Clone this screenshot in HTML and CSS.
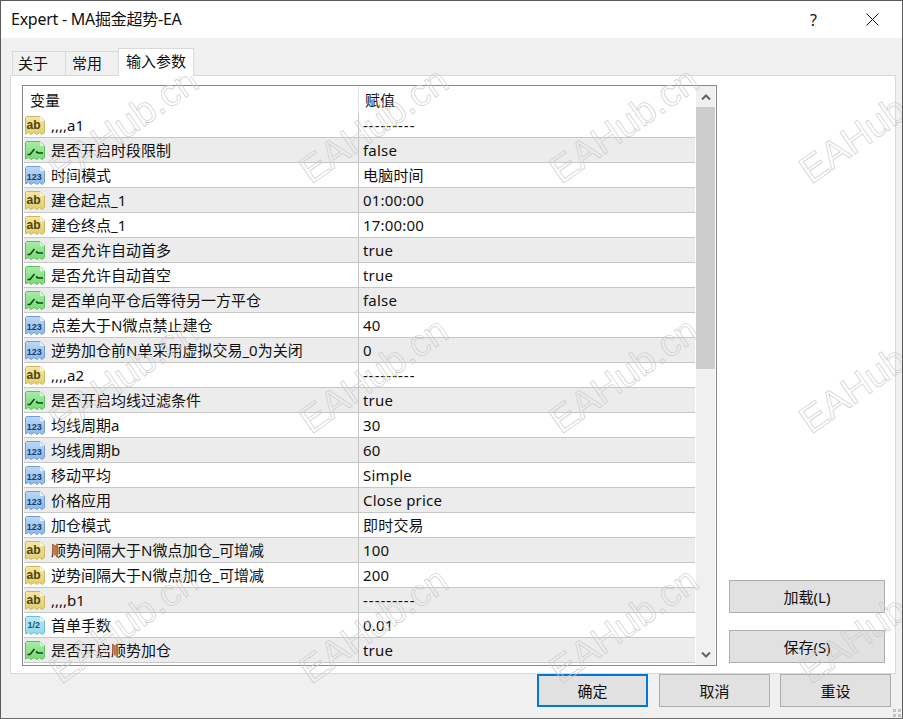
FILE: index.html
```html
<!DOCTYPE html>
<html lang="zh">
<head>
<meta charset="utf-8">
<title>Expert - MA掘金超势-EA</title>
<link rel="stylesheet" href="styles.css">
</head>
<body>
<svg class="defs" width="0" height="0" aria-hidden="true">
  <defs>
    <linearGradient id="gy" x1="0" y1="0" x2="0" y2="1"><stop offset="0" stop-color="#f3e8a4"/><stop offset="1" stop-color="#e2cd6e"/></linearGradient>
    <linearGradient id="gg" x1="0" y1="0" x2="0" y2="1"><stop offset="0" stop-color="#a8eca8"/><stop offset="1" stop-color="#78da78"/></linearGradient>
    <linearGradient id="gb" x1="0" y1="0" x2="0" y2="1"><stop offset="0" stop-color="#bcd8f5"/><stop offset="1" stop-color="#8db8e8"/></linearGradient>
    <linearGradient id="gc" x1="0" y1="0" x2="0" y2="1"><stop offset="0" stop-color="#bdeaf4"/><stop offset="1" stop-color="#90d8ea"/></linearGradient>
    <path id="ticket" d="M2.500 1.500H16L20.500 6V17.500L18 19.500 15.500 17.500 13 19.500 10 17.500 7 19.500 4.500 17.500 1.500 19V2.500Z"/>
  </defs>
  <symbol id="i-ab" viewBox="0 0 22 21">
    <use href="#ticket" class="tk y"/>
    <path class="ear" d="M16 1.500V6H20.500Z"/>
    <text x="2.500" y="14" class="ic ic-y">ab</text>
  </symbol>
  <symbol id="i-bool" viewBox="0 0 22 21">
    <use href="#ticket" class="tk g"/>
    <path class="ear" d="M16 1.500V6H20.500Z"/>
    <path class="sw" d="M3.500 14.500 6 14.500 10.500 9M12 11.500 14 13H19"/>
  </symbol>
  <symbol id="i-num" viewBox="0 0 22 21">
    <use href="#ticket" class="tk b"/>
    <path class="ear" d="M16 1.500V6H20.500Z"/>
    <text x="2.800" y="14.500" class="ic ic-b">123</text>
  </symbol>
  <symbol id="i-frac" viewBox="0 0 22 21">
    <use href="#ticket" class="tk c"/>
    <path class="ear" d="M16 1.500V6H20.500Z"/>
    <text x="3.500" y="13" class="ic ic-c">1/2</text>
  </symbol>
</svg>

<div class="dialog">
  <header class="titlebar">
    <span class="title">Expert - MA掘金超势-EA</span>
    <span class="help">?</span>
    <svg class="close" width="13" height="13" viewBox="0 0 13 13"><path d="M.5.500 12.500 12.500M12.500.500.500 12.500"/></svg>
  </header>

  <main class="content">
    <nav class="tabs">
      <span class="tab">关于</span>
      <span class="tab">常用</span>
      <span class="tab active">输入参数</span>
    </nav>
    <section class="panel">
      <div class="list">
        <div class="table">
          <div class="thead">
            <span class="c1">变量</span>
            <span class="c2">赋值</span>
          </div>
          <div class="row"><span class="c1"><svg class="icon"><use href="#i-ab"/></svg>,,,,a1</span><span class="c2 dash">---------</span></div>
          <div class="row"><span class="c1"><svg class="icon"><use href="#i-bool"/></svg>是否开启时段限制</span><span class="c2">false</span></div>
          <div class="row"><span class="c1"><svg class="icon"><use href="#i-num"/></svg>时间模式</span><span class="c2">电脑时间</span></div>
          <div class="row"><span class="c1"><svg class="icon"><use href="#i-ab"/></svg>建仓起点_1</span><span class="c2">01:00:00</span></div>
          <div class="row"><span class="c1"><svg class="icon"><use href="#i-ab"/></svg>建仓终点_1</span><span class="c2">17:00:00</span></div>
          <div class="row"><span class="c1"><svg class="icon"><use href="#i-bool"/></svg>是否允许自动首多</span><span class="c2">true</span></div>
          <div class="row"><span class="c1"><svg class="icon"><use href="#i-bool"/></svg>是否允许自动首空</span><span class="c2">true</span></div>
          <div class="row"><span class="c1"><svg class="icon"><use href="#i-bool"/></svg>是否单向平仓后等待另一方平仓</span><span class="c2">false</span></div>
          <div class="row"><span class="c1"><svg class="icon"><use href="#i-num"/></svg>点差大于N微点禁止建仓</span><span class="c2">40</span></div>
          <div class="row"><span class="c1"><svg class="icon"><use href="#i-num"/></svg>逆势加仓前N单采用虚拟交易_0为关闭</span><span class="c2">0</span></div>
          <div class="row"><span class="c1"><svg class="icon"><use href="#i-ab"/></svg>,,,,a2</span><span class="c2 dash">---------</span></div>
          <div class="row"><span class="c1"><svg class="icon"><use href="#i-bool"/></svg>是否开启均线过滤条件</span><span class="c2">true</span></div>
          <div class="row"><span class="c1"><svg class="icon"><use href="#i-num"/></svg>均线周期a</span><span class="c2">30</span></div>
          <div class="row"><span class="c1"><svg class="icon"><use href="#i-num"/></svg>均线周期b</span><span class="c2">60</span></div>
          <div class="row"><span class="c1"><svg class="icon"><use href="#i-num"/></svg>移动平均</span><span class="c2">Simple</span></div>
          <div class="row"><span class="c1"><svg class="icon"><use href="#i-num"/></svg>价格应用</span><span class="c2">Close price</span></div>
          <div class="row"><span class="c1"><svg class="icon"><use href="#i-num"/></svg>加仓模式</span><span class="c2">即时交易</span></div>
          <div class="row"><span class="c1"><svg class="icon"><use href="#i-ab"/></svg>顺势间隔大于N微点加仓_可增减</span><span class="c2">100</span></div>
          <div class="row"><span class="c1"><svg class="icon"><use href="#i-ab"/></svg>逆势间隔大于N微点加仓_可增减</span><span class="c2">200</span></div>
          <div class="row"><span class="c1"><svg class="icon"><use href="#i-ab"/></svg>,,,,b1</span><span class="c2 dash">---------</span></div>
          <div class="row"><span class="c1"><svg class="icon"><use href="#i-frac"/></svg>首单手数</span><span class="c2">0.01</span></div>
          <div class="row"><span class="c1"><svg class="icon"><use href="#i-bool"/></svg>是否开启顺势加仓</span><span class="c2">true</span></div>
        </div>
        <div class="scrollbar">
          <div class="arrow"><svg width="10" height="6" viewBox="0 0 10 6"><path d="M1 5.500 5 1.500 9 5.500"/></svg></div>
          <div class="thumb"></div>
          <div class="track"></div>
          <div class="arrow"><svg width="10" height="6" viewBox="0 0 10 6"><path d="M1 .5 5 4.500 9 .5"/></svg></div>
        </div>
      </div>
      <div class="side">
        <button class="btn side-btn">加载(L)</button>
        <button class="btn side-btn">保存(S)</button>
      </div>
    </section>
    <footer class="footer">
      <button class="btn primary">确定</button>
      <button class="btn">取消</button>
      <button class="btn">重设</button>
    </footer>
  </main>
  <div class="grip"></div>
  <div class="watermarks" aria-hidden="true">
    <span>EAHub.cn</span><span>EAHub.cn</span><span>EAHub.cn</span><span>EAHub.cn</span>
    <span>EAHub.cn</span><span>EAHub.cn</span><span>EAHub.cn</span><span>EAHub.cn</span>
    <span>EAHub.cn</span><span>EAHub.cn</span><span>EAHub.cn</span><span>EAHub.cn</span>
  </div>
</div>
</body>
</html>
```
FILE: styles.css
```css
* { box-sizing: border-box; }
html, body { margin: 0; padding: 0; }
body {
  width: 903px;
  height: 719px;
  overflow: hidden;
  font-family: "Noto Sans", "Noto Sans CJK SC", sans-serif;
  font-size: 15px;
  color: #111;
}
.defs { position: absolute; }

.dialog {
  position: relative;
  width: 903px;
  height: 719px;
  border: 1px solid #5a5a5a;
  border-bottom-color: #6e6e6e;
  background: #f0f0f0;
  display: flex;
  flex-direction: column;
  overflow: hidden;
}
.titlebar {
  height: 37px;
  flex: none;
  background: #fff;
  display: flex;
  align-items: center;
  padding: 0 23px 0 10px;
}
.title { font-size: 16px; flex: 1; line-height: 37px; letter-spacing: -.25px; }
.help { font-size: 16px; margin-right: 49px; }
.close { display: block; }
.close path { stroke: #111; stroke-width: 1; fill: none; }

.content { flex: 1; display: flex; flex-direction: column; padding: 0 6px 0 9px; min-height: 0; }
.tabs { display: flex; align-items: flex-end; height: 37px; flex: none; padding-left: 2px; position: relative; z-index: 1; }
.tab {
  height: 24px;
  width: 53px;
  border: 1px solid #d9d9d9;
  border-bottom: 0;
  border-right: 0;
  line-height: 22px;
  padding-left: 5px;
  background: #f0f0f0;
}
.tab + .tab { padding-left: 6px; }
.tab.active {
  width: 76px;
  height: 28px;
  margin-bottom: -1px;
  background: #fff;
  border-right: 1px solid #d9d9d9;
  padding-left: 7px;
  line-height: 25px;
}

.panel {
  height: 599px;
  flex: none;
  background: #fff;
  border: 1px solid #d9d9d9;
  display: flex;
  padding: 9px 0 0 11px;
}
.list {
  width: 695px;
  height: 581px;
  flex: none;
  border: 1px solid #88888c;
  display: flex;
  padding: 0 2px 0 1px;
}
.table { width: 671px; flex: none; }
.thead { height: 27px; display: flex; line-height: 28px; }
.thead .c1 { padding-left: 6px; }
.thead .c2 { padding-left: 6px; border-left: 1px solid #e4e4e4; }
.c1 { width: 334px; flex: none; display: flex; align-items: center; white-space: nowrap; }
.c2 { flex: 1; white-space: nowrap; }
.row {
  height: 25px;
  display: flex;
  line-height: 24px;
  border-bottom: 1px solid #c6c6c6;
  background: #fff;
}
.row:nth-child(odd) { background: #ececec; }
.row .c2 { border-left: 1px solid #c6c6c6; padding-left: 4px; letter-spacing: .2px; }
.row .dash { letter-spacing: 1px; }
.icon { width: 22px; height: 21px; margin: 0 5px 0 0; flex: none; display: block; }

.tk { stroke-width: 1; }
.tk.y { fill: url(#gy); stroke: #cdb861; }
.tk.g { fill: url(#gg); stroke: #5cc25c; }
.tk.b { fill: url(#gb); stroke: #6f9fd6; }
.tk.c { fill: url(#gc); stroke: #6cc0d6; }
.ear { fill: #fff; opacity: .7; }
.sw { stroke: #0f4a0f; stroke-width: 1.6; fill: none; }
.ic { font-family: "Liberation Sans", sans-serif; font-weight: 700; }
.ic-y { font-size: 12px; fill: #4f4210; }
.ic-b { font-size: 9px; fill: #143f73; }
.ic-c { font-size: 9px; fill: #125a6e; }

.scrollbar { width: 19px; margin-left: 1px; flex: none; display: flex; flex-direction: column; background: #f0f0f0; }
.arrow { height: 21px; flex: none; display: flex; align-items: center; justify-content: center; }
.arrow path { fill: none; stroke: #606060; stroke-width: 2; }
.thumb { height: 262px; flex: none; background: #cdcdcd; }
.track { flex: 1; }

.side {
  flex: 1;
  display: flex;
  flex-direction: column;
  align-items: flex-end;
  justify-content: flex-end;
  gap: 17px;
  padding: 0 10px 10px 0;
}
.btn {
  font: inherit;
  color: #111;
  width: 111px;
  height: 33px;
  background: #e1e1e1;
  border: 1px solid #adadad;
  padding: 0;
}
.side-btn { width: 156px; }
.footer { display: flex; justify-content: flex-end; gap: 10px; padding-right: 5px; flex: none; }
.primary { border: 2px solid #0078d7; margin-right: 1px; }

.grip {
  position: absolute;
  right: 1px;
  bottom: 1px;
  width: 8px;
  height: 8px;
  background:
    linear-gradient(#c4c4c4, #c4c4c4) 0 0 / 3px 3px no-repeat,
    linear-gradient(#c4c4c4, #c4c4c4) 5px 0 / 3px 3px no-repeat,
    linear-gradient(#c4c4c4, #c4c4c4) 0 5px / 3px 3px no-repeat,
    linear-gradient(#c4c4c4, #c4c4c4) 5px 5px / 3px 3px no-repeat;
}

.watermarks {
  position: absolute;
  left: 0;
  top: 0;
  display: grid;
  grid-template-columns: repeat(4, 250px);
  grid-auto-rows: 250px;
  pointer-events: none;
}
.watermarks span {
  display: block;
  align-self: start;
  justify-self: start;
  white-space: nowrap;
  margin: 104px 0 0 37px;
  font-family: "Liberation Sans", sans-serif;
  font-size: 38px;
  line-height: 40px;
  color: transparent;
  -webkit-text-stroke: .7px #cdcdcd;
  transform: rotate(-35deg);
}
```
